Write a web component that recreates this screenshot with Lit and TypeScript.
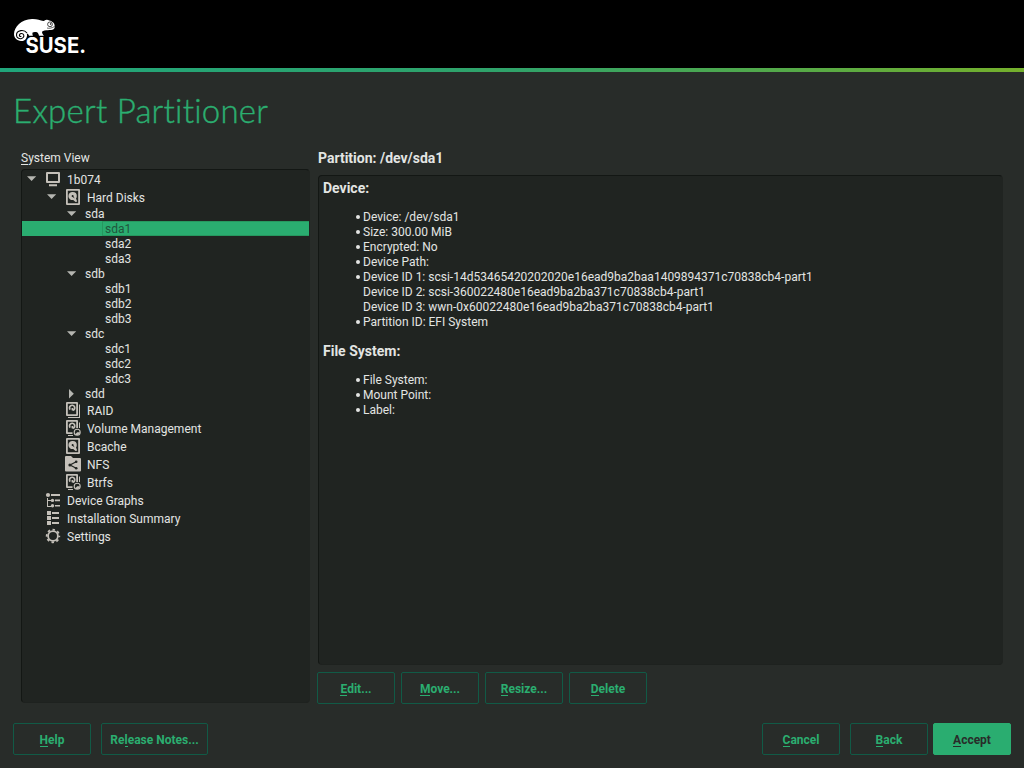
import { LitElement, html, svg, css } from "lit";
import { customElement, property } from "lit/decorators.js";

const swirl = svg`<path d="M5.2 7.600A2.600 2.600 0 1 1 8.600 8L7.400 7.700V6" fill="none" stroke="currentColor" stroke-width="1.700"/>`;

const icons: Record<string, unknown> = {
  computer: svg`<path fill-rule="evenodd" d="M2 1h12q1 0 1 1v9q0 1-1 1H2q-1 0-1-1V2q0-1 1-1zM3 3v7h10V3zM4 13.200h8v2H4z"/>`,
  disk: svg`<path fill-rule="evenodd" d="M2 0h12q1 0 1 1v14q0 1-1 1H2q-1 0-1-1V1q0-1 1-1zM2.800 1.800v12.400h10.400V1.800z"/><path fill-rule="evenodd" d="M7.800 3a4 4 0 0 1 4 4q0 1.600-.8 2.600l1.200 2.900-1.600.6-2.400-2.200A4 4 0 1 1 7.800 3zM7.600 6.200 9.800 9.400 6.800 7.600z"/><circle cx="7.600" cy="7" r="1" fill="#202421"/>`,
  raid: svg`<path fill-rule="evenodd" d="M2 0h10q1 0 1 1v12q0 1-1 1H2q-1 0-1-1V1q0-1 1-1zM2.800 1.800v10.400h8.400V1.800z"/><path d="M14 2.500h1V16H3v-1h11z"/>${swirl}`,
  volume: svg`<path d="M2 0h10q1 0 1 1v7h-1.800V1.800H2.800v10.400H7.500V14H2q-1 0-1-1V1q0-1 1-1z"/><path d="M14 2.500h1V8h-1zM3 15h5v1H3z"/>${swirl}<circle cx="12.200" cy="12.200" r="3" fill="none" stroke="currentColor" stroke-width="1.100"/><path d="M12.200 12.200h2.800a2.800 2.800 0 0 1-4.800 2z"/>`,
  nfs: svg`<path d="M0 1q0-1 1-1h5l2 2h7q1 0 1 1v11.500q0 1-1 1H1q-1 0-1-1z"/><path d="M11.200 5.800 5 9l6.200 3.200" fill="none" stroke="#202421" stroke-width="1.200"/><circle cx="11.200" cy="5.800" r="1.300" fill="#202421"/><circle cx="4.900" cy="9" r="1.500" fill="#202421"/><circle cx="11.200" cy="12.200" r="1.300" fill="#202421"/>`,
  graph: svg`<circle cx="3" cy="3" r="2.100"/><path d="M6 2h9v2H6zM2 6h1v8h3v1H2zM3 8h3v1H3zM10 7.600h5v1.600h-5zM10 13h5v1.600h-5z"/><circle cx="7.500" cy="8.400" r="1.700"/><circle cx="7.500" cy="13.800" r="1.700"/>`,
  summary: svg`<path d="M2 1h4v4H2zM2 6h4v4H2zM2 11h4v4H2zM7 2h7v2H7zM7 7h7v2H7zM7 12h7v2H7z"/>`,
  gear: svg`<circle cx="8" cy="8" r="4.900" fill="none" stroke="currentColor" stroke-width="1.800"/><circle cx="8" cy="8" r="6.300" fill="none" stroke="currentColor" stroke-width="1.800" stroke-dasharray="2.500 2.448" stroke-dashoffset="1.250"/>`,
};

interface Node {
  label: string;
  level: number;
  icon?: string;
  arrow?: "open" | "closed";
  selected?: boolean;
}

const nodes: Node[] = [
  { label: "1b074", level: 0, icon: "computer", arrow: "open" },
  { label: "Hard Disks", level: 1, icon: "disk", arrow: "open" },
  { label: "sda", level: 2, arrow: "open" },
  { label: "sda1", level: 3, selected: true },
  { label: "sda2", level: 3 },
  { label: "sda3", level: 3 },
  { label: "sdb", level: 2, arrow: "open" },
  { label: "sdb1", level: 3 },
  { label: "sdb2", level: 3 },
  { label: "sdb3", level: 3 },
  { label: "sdc", level: 2, arrow: "open" },
  { label: "sdc1", level: 3 },
  { label: "sdc2", level: 3 },
  { label: "sdc3", level: 3 },
  { label: "sdd", level: 2, arrow: "closed" },
  { label: "RAID", level: 1, icon: "raid" },
  { label: "Volume Management", level: 1, icon: "volume" },
  { label: "Bcache", level: 1, icon: "disk" },
  { label: "NFS", level: 1, icon: "nfs" },
  { label: "Btrfs", level: 1, icon: "volume" },
  { label: "Device Graphs", level: 0, icon: "graph" },
  { label: "Installation Summary", level: 0, icon: "summary" },
  { label: "Settings", level: 0, icon: "gear" },
];

/** Push button; `key` is the index of the underlined mnemonic letter. */
@customElement("push-button")
class PushButton extends LitElement {
  @property() label = "";
  @property({ type: Number }) key = 0;
  @property({ type: Boolean, reflect: true }) primary = false;

  static styles = css`
    :host { display: block; width: 78px; height: 32px; }
    button {
      width: 100%; height: 100%; box-sizing: border-box; padding: 2px 0 0;
      border: 1px solid #115a46; border-radius: 2px; background: transparent;
      color: #2bae70; font: 700 12px/15px Roboto, sans-serif; white-space: nowrap;
    }
    :host([primary]) button { background: #2aad70; border-color: #2aad70; color: #282c29; }
    .key { display: inline-block; height: 13px; border-bottom: 1px solid currentColor; }
  `;

  render() {
    const k = this.key;
    return html`<button>${this.label.slice(0, k)}<span class="key">${this.label[k]}</span>${this.label.slice(k + 1)}</button>`;
  }
}

@customElement("system-tree")
class SystemTree extends LitElement {
  static styles = css`
    :host { display: block; }
    .row { display: flex; align-items: center; height: 15px; color: #e3e5e3; }
    .row.tall { height: 18px; }
    .row.selected { background: #2aad70; color: #20563c; }
    .arrow { width: 20px; display: flex; justify-content: center; flex: none; }
    .arrow svg { display: block; fill: #b5b6b1; }
    .icon { width: 16px; height: 16px; margin: 0 6px 0 3px; fill: currentColor; color: #c4c0b9; flex: none; }
    .label { flex: none; padding: 1px 0 0 3px; height: 15px; box-sizing: border-box; line-height: 15px; }
    .tall .label { height: auto; padding: 2px 0 0; }
    .selected .label { flex: 1; padding: 0 0 0 2px; border: 1px solid #26985f; border-right: 0; }
  `;

  render() {
    return nodes.map(
      (n) => html`<div
        class="row ${n.icon ? "tall" : ""} ${n.selected ? "selected" : ""}"
        style="padding-left:${n.level * 20}px"
      >
        <span class="arrow">${
          n.arrow
            ? html`<svg width="10" height="10" viewBox="0 0 10 10"><path d=${n.arrow === "open" ? "M0 2.2h9.200L4.600 7z" : "M2 0v9.600l4.800-4.800z"} /></svg>`
            : ""
        }</span>
        ${n.icon ? html`<svg class="icon" viewBox="0 0 16 16">${icons[n.icon]}</svg>` : ""}
        <span class="label">${n.label}</span>
      </div>`
    );
  }
}

@customElement("app-root")
class AppRoot extends LitElement {
  static styles = css`
    :host {
      display: flex; flex-direction: column; width: 1024px; height: 768px; overflow: hidden;
      background: #282c29; color: #e3e5e3; font: 12px/15px Roboto, sans-serif;
    }
    header { height: 68px; background: #000; flex: none; }
    .logo { display: block; }
    .stripe { height: 4px; flex: none; background: linear-gradient(90deg, #20a67b, #30a36a 50%, #75b02c); }
    h1 {
      margin: 16px 0 0 13px; height: 45px; font: 300 33px/44px Lato, sans-serif; color: #2bae70;
      white-space: nowrap; letter-spacing: 0.24px; -webkit-text-stroke: 0.4px #2bae70;
    }
    main { display: flex; height: 571px; flex: none; padding: 17px 21px 0; box-sizing: border-box; gap: 8px; }
    .side { width: 289px; flex: none; }
    .caption { height: 19px; line-height: 16px; }
    .caption u { text-underline-offset: 2px; }
    .panel { border: 1px solid #131714; border-right-color: #202421; border-bottom-color: #1e221f; border-radius: 4px; background: #202421; box-sizing: border-box; }
    .tree { height: 534px; }
    .detail { display: flex; flex-direction: column; width: 685px; flex: none; }
    h2 { margin: 0; height: 25px; font: 700 14px/17px Roboto, sans-serif; }
    .info { height: 490px; padding: 4px; }
    h3 { margin: 0; font: 700 14px/16px Roboto, sans-serif; }
    ul { list-style: none; margin: 14px 0 13px; padding: 0 0 0 40px; }
    li { display: flex; height: 15px; white-space: pre; }
    li::before { content: ""; width: 4px; height: 4px; border-radius: 50%; background: currentColor; margin: 5px 3px 0 -7px; }
    li.cont::before { visibility: hidden; }
    .actions { display: flex; gap: 6px; margin: 7px 0 0 -1px; }
    footer { display: flex; padding: 19px 13px 0; }
    .wide { width: 107px; }
  `;

  render() {
    return html`
      <header>
        <svg class="logo" width="100" height="68" viewBox="0 0 100 68">
          <path fill="#fff" d="M14 34C14.300 27 21 19.500 32 19C37 18.800 40 20.500 43.500 21C45 21 45 19.500 47 19.800C50 20.400 53.500 22 54.300 24C55 27 54.800 28.500 53.500 29.300C51 30.800 44.500 29.500 42 31.800C42 33.500 43 34.800 44 35.700H39C38.600 33.500 37.500 32.200 36 32C34.500 31.700 33.500 32 32.600 32.400C32.200 33.500 32.500 34.700 33 35.700H29C28.600 34.500 28 33.500 26.800 33.500C27.600 36 26.500 38.500 25.200 39.700C24 40.700 22.500 41 21 40.900C17 40.700 14 38 14 34z"/>
          <path d="M27 33C25.500 31 23 30.300 20.800 30.600C17.800 31.100 16.400 33.300 16.500 35.200C16.700 38 19 38.900 21 38.700C23.200 38.400 24.300 36.500 23.700 34.900C22.900 33.200 20.300 33.100 19.500 34.700C19 36 20.200 37 21.300 36.300" fill="none" stroke="#000" stroke-width="1.100"/>
          <circle cx="50" cy="24.300" r="2.400" fill="none" stroke="#000" stroke-width=".7"/><circle cx="50.600" cy="24" r=".8"/>
          <path d="M47 28c2 .7 5 .1 7.500-1.500" fill="none" stroke="#000" stroke-width=".6"/>
          <text x="25.500" y="52.800" textLength="60.500" lengthAdjust="spacingAndGlyphs" font-family="Inter, sans-serif" font-weight="700" font-size="21" fill="#fff">SUSE.</text>
        </svg>
      </header>
      <div class="stripe"></div>
      <h1>Expert Partitioner</h1>
      <main>
        <section class="side">
          <div class="caption"><u>S</u>ystem View</div>
          <div class="panel tree"><system-tree></system-tree></div>
        </section>
        <section class="detail">
          <h2>Partition: /dev/sda1</h2>
          <div class="panel info">
            <h3>Device:</h3>
            <ul>
              <li>Device: /dev/sda1</li>
              <li>Size: 300.00 MiB</li>
              <li>Encrypted: No</li>
              <li>Device Path:</li>
              <li>Device ID 1: scsi-14d53465420202020e16ead9ba2baa1409894371c70838cb4-part1</li>
              <li class="cont">Device ID 2: scsi-360022480e16ead9ba2ba371c70838cb4-part1</li>
              <li class="cont">Device ID 3: wwn-0x60022480e16ead9ba2ba371c70838cb4-part1</li>
              <li>Partition ID: EFI System</li>
            </ul>
            <h3>File System:</h3>
            <ul>
              <li>File System:</li>
              <li>Mount Point:</li>
              <li>Label:</li>
            </ul>
          </div>
          <div class="actions">
            <push-button label="Edit..."></push-button>
            <push-button label="Move..."></push-button>
            <push-button label="Resize..."></push-button>
            <push-button label="Delete"></push-button>
          </div>
        </section>
      </main>
      <footer>
        <push-button label="Help"></push-button>
        <push-button class="wide" style="margin-left:10px" label="Release Notes..." key="2"></push-button>
        <push-button style="margin-left:auto" label="Cancel"></push-button>
        <push-button style="margin-left:10px" label="Back"></push-button>
        <push-button style="margin-left:5px" label="Accept" primary></push-button>
      </footer>
    `;
  }
}
